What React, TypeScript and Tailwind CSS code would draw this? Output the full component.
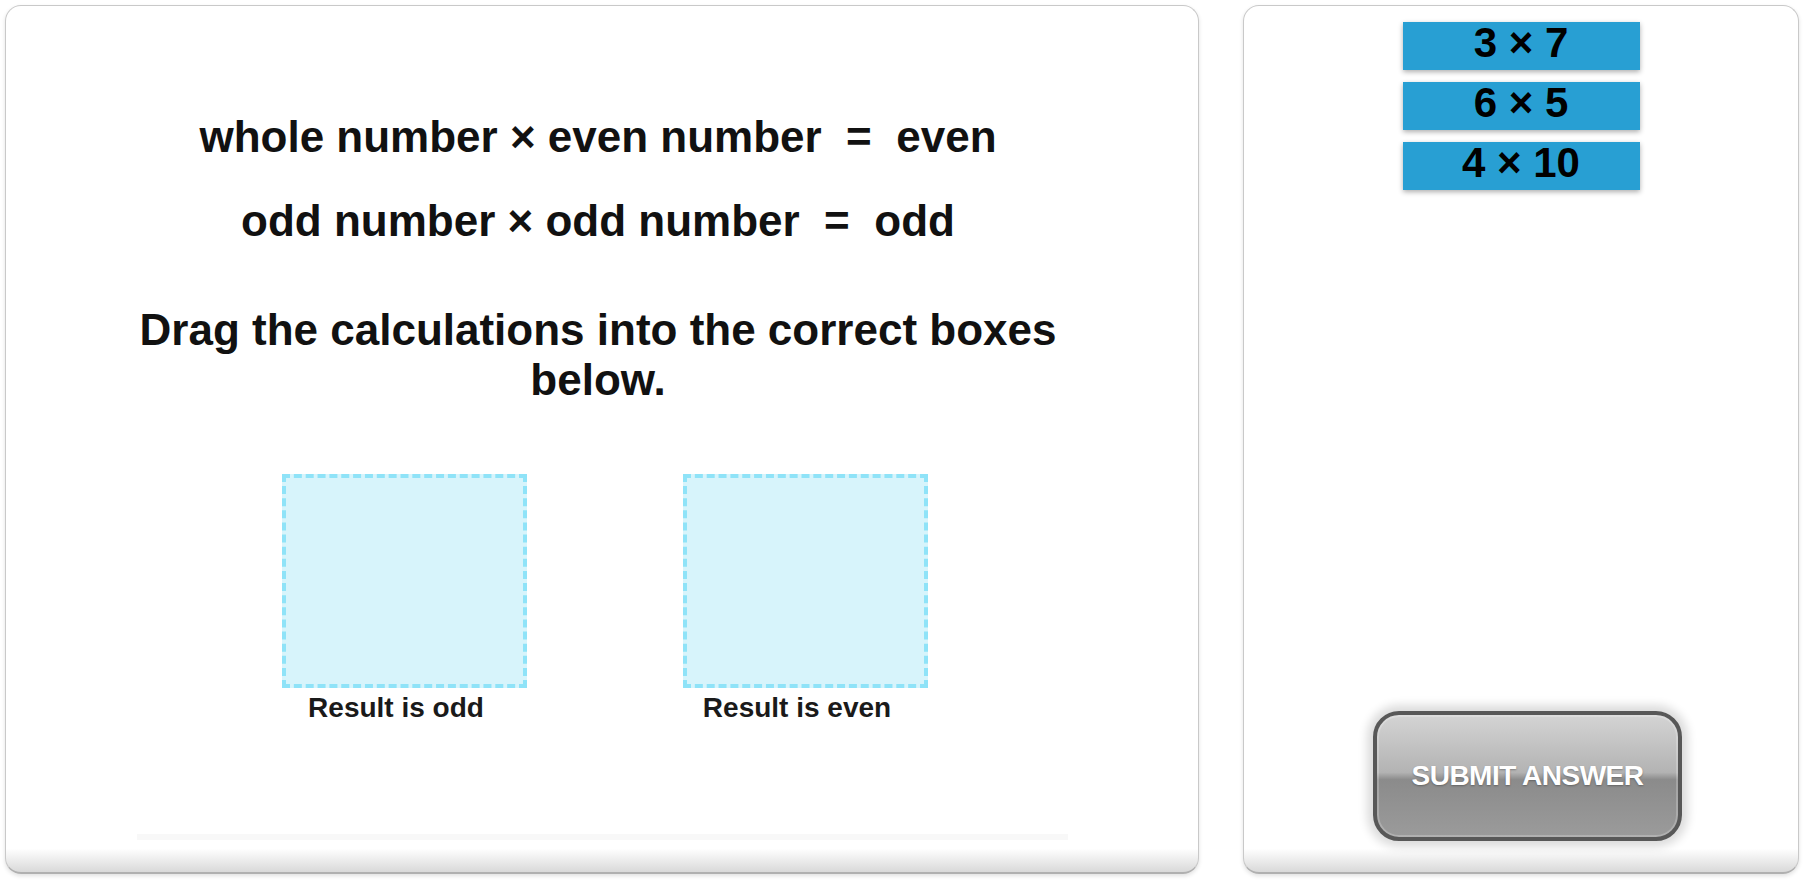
import React from "react";

const tiles = ["3 × 7", "6 × 5", "4 × 10"];

const drops = [
  { label: "Result is odd" },
  { label: "Result is even" },
];

export default function App() {
  return (
    <div className="flex min-h-[892px] w-full gap-[44px] bg-white pl-[5px] pt-[5px] font-['Liberation_Sans',Arial,sans-serif] text-[#111]">
      {/* Question card */}
      <section className="flex h-[869px] w-[1194px] flex-col items-center rounded-[16px] border border-[#c9c9c9] border-b-2 border-b-[#b0b0b0] bg-linear-to-b from-white from-[97.3%] to-[#d9d9d9] shadow-[0_2px_4px_rgba(0,0,0,0.12)]">
        <div className="mt-[106px] flex flex-col items-center pr-[8px] text-[44px] font-bold leading-[50px]">
          <p>whole number × even number&nbsp;&nbsp;=&nbsp;&nbsp;even</p>
          <p className="mt-[34px]">odd number × odd number&nbsp;&nbsp;=&nbsp;&nbsp;odd</p>
          <p className="mt-[59px] w-[960px] text-center">Drag the calculations into the correct boxes below.</p>
        </div>

        <div className="mt-[69px] flex items-end gap-[156px] pl-[5px]">
          {drops.map((d) => (
            <div key={d.label} className="flex flex-col items-center">
              <div className="h-[214px] w-[245px] border-4 border-dashed border-[#8fe3f8] bg-[#d7f4fb]" />
              <span className="mt-[4px] mr-[16px] text-[28px] font-bold leading-[32px] text-[#1a1a1a]">{d.label}</span>
            </div>
          ))}
        </div>

        <div className="mt-auto mb-[32px] h-[6px] w-[931px] bg-[#f8f8f8]" />
      </section>

      {/* Answer tiles card */}
      <section className="flex h-[869px] w-[556px] flex-col rounded-[16px] border border-[#c9c9c9] border-b-2 border-b-[#b0b0b0] bg-linear-to-b from-white from-[97.3%] to-[#d9d9d9] shadow-[0_2px_4px_rgba(0,0,0,0.12)]">
        <div className="mt-[16px] flex flex-col items-center gap-[12px]">
          {tiles.map((t) => (
            <div
              key={t}
              className="flex h-[48px] w-[237px] items-start justify-center bg-[#289fd3] text-[42px] font-bold leading-[42px] text-black shadow-[0_2px_5px_rgba(0,0,0,0.32)]"
            >
              {t}
            </div>
          ))}
        </div>

        <div className="mt-auto mb-[31px] pl-[129px]">
          <button className="flex h-[130px] w-[309px] items-center justify-center rounded-[26px] border-4 border-[#585858] bg-[linear-gradient(to_bottom,#d4d4d4_0%,#b3b3b3_47%,#8b8b8b_53%,#9b9b9b_100%)] text-[28px] font-bold tracking-[-0.5px] text-white shadow-[0_0_10px_6px_rgba(0,0,0,0.14),inset_0_0_0_2px_rgba(255,255,255,0.22)] [text-shadow:0_1px_2px_rgba(0,0,0,0.3)]">
            SUBMIT ANSWER
          </button>
        </div>
      </section>
    </div>
  );
}
